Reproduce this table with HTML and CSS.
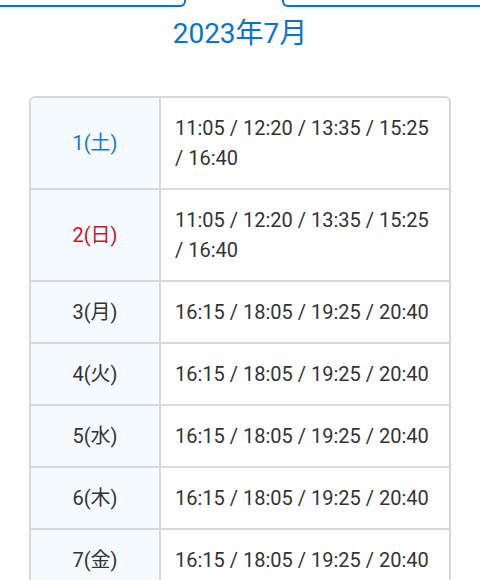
FILE: index.html
```html
<!DOCTYPE html>
<html lang="ja">
<head>
<meta charset="utf-8">
<link rel="stylesheet" href="styles.css">
</head>
<body>
<div class="tabs">
  <div class="tab tab-left"></div>
  <div class="tab-gap"></div>
  <div class="tab tab-right"></div>
</div>
<h1 class="month">2023年7月</h1>
<table class="schedule">
  <tr><th class="sat">1(土)</th><td>11:05 / 12:20 / 13:35 / 15:25 / 16:40</td></tr>
  <tr><th class="sun">2(日)</th><td>11:05 / 12:20 / 13:35 / 15:25 / 16:40</td></tr>
  <tr><th>3(月)</th><td>16:15 / 18:05 / 19:25 / 20:40</td></tr>
  <tr><th>4(火)</th><td>16:15 / 18:05 / 19:25 / 20:40</td></tr>
  <tr><th>5(水)</th><td>16:15 / 18:05 / 19:25 / 20:40</td></tr>
  <tr><th>6(木)</th><td>16:15 / 18:05 / 19:25 / 20:40</td></tr>
  <tr><th>7(金)</th><td>16:15 / 18:05 / 19:25 / 20:40</td></tr>
</table>
</body>
</html>
```
FILE: styles.css
```css
html, body {
  margin: 0;
  padding: 0;
  background: #ffffff;
}
body {
  width: 480px;
  overflow: hidden;
  font-family: Roboto, "Noto Sans CJK JP", sans-serif;
  color: #333333;
}
.tabs {
  display: flex;
  height: 7px;
}
.tab {
  box-sizing: border-box;
  height: 7px;
  border-bottom: 2px solid #0a72c6;
}
.tab-left {
  width: 186px;
  border-right: 2px solid #0a72c6;
  border-bottom-right-radius: 6px;
}
.tab-gap {
  width: 96px;
}
.tab-right {
  flex: 1;
  border-left: 2px solid #0a72c6;
  border-bottom-left-radius: 6px;
}
.month {
  margin: 9px 0 44px;
  text-align: center;
  font-size: 28px;
  line-height: 36px;
  font-weight: 400;
  color: #0a74c8;
}
.schedule {
  margin-left: 29px;
  width: 422px;
  border-collapse: separate;
  border-spacing: 0;
  border: 2px solid #d8d8d8;
  border-radius: 6px;
  font-size: 20px;
  line-height: 30px;
}
.schedule th,
.schedule td {
  padding: 15px;
  border-bottom: 2px solid #d8d8d8;
  vertical-align: middle;
}
.schedule th {
  width: 98px;
  font-weight: 400;
  text-align: center;
  background: #f4fafe;
  border-right: 2px solid #d8d8d8;
}
.schedule tr:first-child th {
  border-top-left-radius: 4px;
}
.schedule td {
  text-align: left;
  padding-left: 14px;
}
.schedule .sat {
  color: #1a78c8;
}
.schedule .sun {
  color: #d0102a;
}
```
